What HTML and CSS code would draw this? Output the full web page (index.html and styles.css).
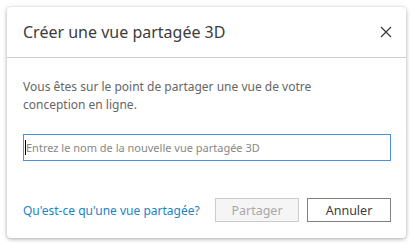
FILE: index.html
```html
<!DOCTYPE html>
<html lang="fr">
<head>
<meta charset="utf-8">
<link rel="stylesheet" href="styles.css">
</head>
<body>
<div class="page">
  <div class="dialog">
    <div class="header">
      <span class="title">Créer une vue partagée 3D</span>
      <svg class="close" width="12" height="12" viewBox="0 0 12 12"><path d="M1 1L11 11M11 1L1 11" stroke="#3c3c3c" stroke-width="1.3" fill="none"/></svg>
    </div>
    <div class="body">
      <p class="desc">Vous êtes sur le point de partager une vue de votre<br>conception en ligne.</p>
      <div class="input"><span class="caret"></span><span class="placeholder">Entrez le nom de la nouvelle vue partagée 3D</span></div>
    </div>
    <div class="footer">
      <a class="link">Qu'est-ce qu'une vue partagée?</a>
      <div class="buttons">
        <button class="btn disabled">Partager</button>
        <button class="btn">Annuler</button>
      </div>
    </div>
  </div>
</div>
</body>
</html>
```
FILE: styles.css
```css
html, body { margin: 0; padding: 0; background: #fff; }
body { font-family: "Noto Sans", sans-serif; }
.page { padding: 7px 8px 8px 7px; }
.dialog {
  width: 399px;
  height: 231px;
  background: #fff;
  border-radius: 4px;
  box-shadow: 0 1px 4px rgba(0,0,0,0.35);
  display: flex;
  flex-direction: column;
  box-sizing: border-box;
}
.header {
  height: 51px;
  border-bottom: 1px solid #cfcfcf;
  display: flex;
  align-items: center;
  justify-content: space-between;
  padding: 0 14px 0 16px;
  box-sizing: border-box;
}
.title { font-size: 16px; color: #3c3c3c; }
.close { display: block; }
.body { padding: 20px 15px 0 16px; }
.desc { margin: 0; font-size: 12px; line-height: 18px; color: #666; }
.input {
  margin-top: 20px;
  height: 27px;
  border: 1px solid #4a90e2;
  box-sizing: border-box;
  display: flex;
  align-items: center;
  padding-left: 1px;
}
.caret { width: 1px; height: 15px; background: #000; }
.placeholder { font-size: 11px; color: #888; }
.footer {
  margin-top: auto;
  padding: 0 15px 16px 16px;
  display: flex;
  align-items: center;
  justify-content: space-between;
}
.link { font-size: 12px; color: #1a84c7; }
.buttons { display: flex; gap: 8px; }
.btn {
  width: 84px;
  height: 24px;
  font-family: "Noto Sans", sans-serif;
  font-size: 12.5px;
  background: #fff;
  border: 1px solid #808080;
  color: #3c3c3c;
  padding: 0;
}
.btn.disabled { background: #f5f5f5; border-color: #cccccc; color: #a8a8a8; }
```
